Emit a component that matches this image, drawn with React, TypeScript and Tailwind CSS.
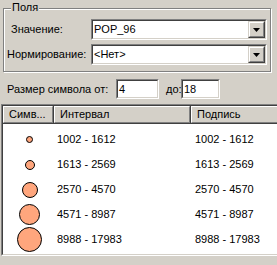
import React from "react";

const rows = [
  { d: 6, range: "1002 - 1612" },
  { d: 9, range: "1613 - 2569" },
  { d: 15, range: "2570 - 4570" },
  { d: 20, range: "4571 - 8987" },
  { d: 24, range: "8988 - 17983" },
];

function Sunken({ className, children }: { className: string; children?: React.ReactNode }) {
  return (
    <div className={`border border-t-[#808080] border-l-[#808080] border-b-white border-r-white ${className}`}>
      <div className="h-full border border-t-[#404040] border-l-[#404040] border-b-[#d4d0c8] border-r-[#d4d0c8] bg-white">
        {children}
      </div>
    </div>
  );
}

function Combo({ value }: { value: string }) {
  return (
    <Sunken className="w-[176px] h-[21px]">
      <div className="flex h-full items-center">
        <span className="flex-1 pl-[1px]">{value}</span>
        <div className="h-full w-[17px] border border-t-[#d4d0c8] border-l-[#d4d0c8] border-b-[#404040] border-r-[#404040]">
          <div className="flex h-full items-center justify-center border border-t-white border-l-white border-b-[#808080] border-r-[#808080] bg-[#d4d0c8]">
            <svg width="7" height="4" viewBox="0 0 7 4">
              <path d="M0 0h7L3.5 4z" fill="#000" />
            </svg>
          </div>
        </div>
      </div>
    </Sunken>
  );
}

function HeaderCell({ label, className }: { label: string; className: string }) {
  return (
    <div className={`h-full border-r border-b border-r-[#404040] border-b-[#404040] ${className}`}>
      <div className="flex h-full items-center border border-t-white border-l-white border-b-[#808080] border-r-[#808080] bg-[#d4d0c8] pl-[5px]">
        {label}
      </div>
    </div>
  );
}

export default function App() {
  return (
    <div className="w-[277px] h-[265px] overflow-hidden bg-[#d4d0c8] pt-[8px] text-[11px] leading-[13px] text-black font-['Liberation_Sans',Arial,sans-serif]">
      <div className="relative ml-[3px] flex w-[268px] flex-col gap-[4px] border border-[#808080] pt-[10px] pb-[6px] shadow-[inset_1px_1px_0_#fff,1px_1px_0_#fff]">
        <span className="absolute -top-[8px] left-[7px] bg-[#d4d0c8] px-[1px]">Поля</span>
        <div className="flex h-[21px] items-center">
          <span className="w-[87px] pl-[7px]">Значение:</span>
          <Combo value="POP_96" />
        </div>
        <div className="flex h-[21px] items-center">
          <span className="w-[87px] pl-[3px]">Нормирование:</span>
          <Combo value="<Нет>" />
        </div>
      </div>

      <div className="mt-[7px] flex h-[20px] items-center">
        <span className="w-[116px] pl-[7px]">Размер символа от:</span>
        <Sunken className="w-[43px] h-[20px]">
          <div className="flex h-full items-center pl-[1px]">4</div>
        </Sunken>
        <span className="ml-[7px] w-[15px] whitespace-nowrap">до:</span>
        <Sunken className="w-[39px] h-[20px]">
          <div className="flex h-full items-center pl-[1px]">18</div>
        </Sunken>
      </div>

      <Sunken className="mt-[5px] ml-[1px] w-[300px] h-[152px]">
        <div className="flex h-[18px]">
          <HeaderCell label="Симв..." className="w-[51px]" />
          <HeaderCell label="Интервал" className="w-[137px]" />
          <HeaderCell label="Подпись" className="flex-1" />
        </div>
        <div className="flex flex-col pt-[3px]">
          {rows.map((r) => (
            <div key={r.range} className="flex h-[25px] items-center">
              <div className="flex w-[51px] justify-center pl-[2px]">
                <svg width={r.d + 1} height={r.d + 1} viewBox={`0 0 ${r.d + 1} ${r.d + 1}`}>
                  <circle cx={(r.d + 1) / 2} cy={(r.d + 1) / 2} r={r.d / 2} fill="#ffa67d" stroke="#000" strokeWidth="1" />
                </svg>
              </div>
              <span className="w-[137px] pl-[3px]">{r.range}</span>
              <span className="pl-[4px]">{r.range}</span>
            </div>
          ))}
        </div>
      </Sunken>
    </div>
  );
}
